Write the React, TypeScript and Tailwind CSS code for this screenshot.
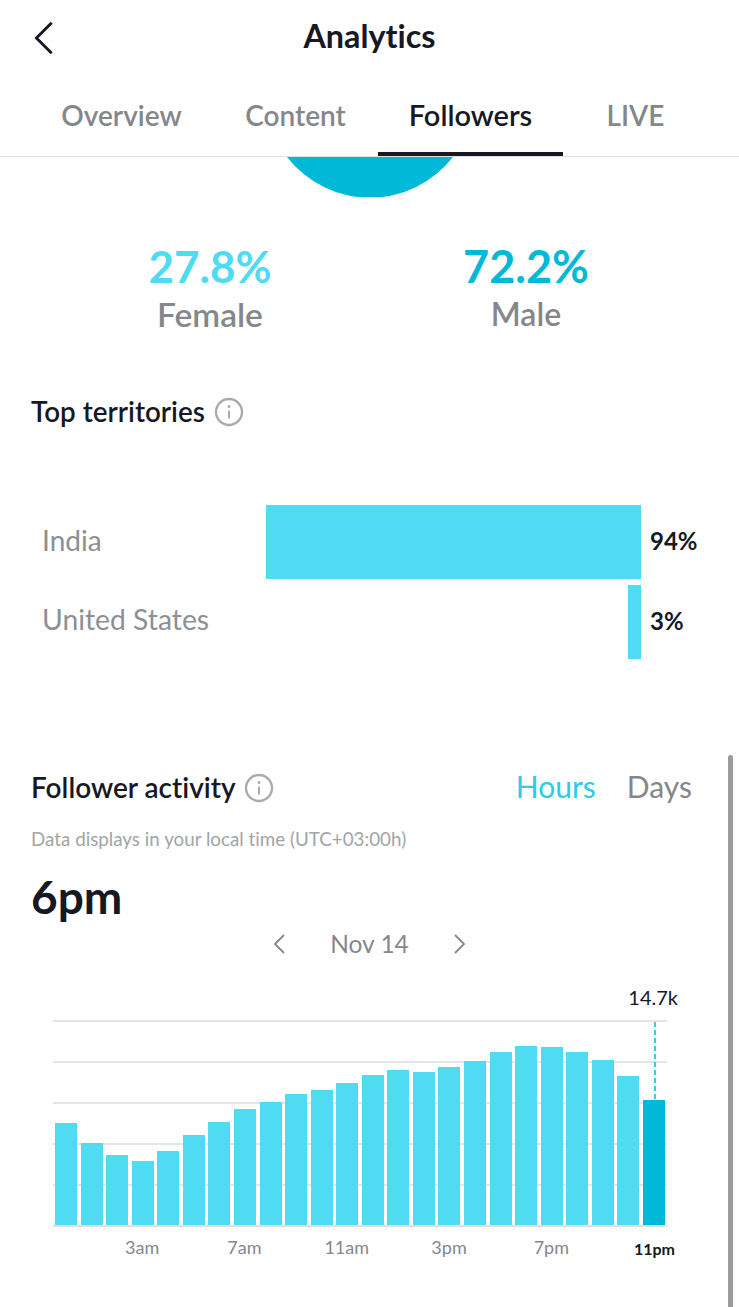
const heights = [102, 82, 70, 64, 74, 90, 103, 116, 123, 131, 135, 142, 150, 155, 153, 158, 164, 173, 179, 178, 173, 165, 149, 125];
const axisLabels = ["3am", "7am", "11am", "3pm", "7pm"];

function Info() {
  return (
    <svg width="30" height="30" viewBox="0 0 30 30" fill="none" className="shrink-0">
      <circle cx="15" cy="15" r="13" stroke="#a9abae" strokeWidth="2.4" />
      <circle cx="15" cy="9.5" r="1.5" fill="#a9abae" />
      <path d="M15 13.5v8" stroke="#a9abae" strokeWidth="2" />
    </svg>
  );
}

function Chev({ dir, size, color, w }: { dir: "l" | "r"; size: number; color: string; w: number }) {
  return (
    <svg width={size * 0.6} height={size} viewBox="0 0 12 20" fill="none">
      <path d={dir === "l" ? "M11 1 2 10l9 9" : "M1 1l9 9-9 9"} stroke={color} strokeWidth={w} />
    </svg>
  );
}

export default function App() {
  return (
    <div className="relative h-[1307px] w-[739px] overflow-hidden bg-white font-['Lato','Liberation_Sans',sans-serif] [font-variant-ligatures:none] text-[#161823]">
      <header className="relative flex h-[76px] items-center justify-center">
        <div className="absolute left-[33px] top-[21px]">
          <Chev dir="l" size={34} color="#161823" w={1.7} />
        </div>
        <h1 className="pb-[4px] text-[32.3px] font-bold">Analytics</h1>
      </header>

      <nav className="flex h-[81px] border-b border-[#dedfe0] pl-[30px] text-[28px] font-semibold text-[#85878b]">
        <div className="flex w-[183px] items-center justify-center pb-[2px]">Overview</div>
        <div className="flex w-[165px] items-center justify-center pb-[2px]">Content</div>
        <div className="flex w-[185px] items-center justify-center border-b-[4px] border-[#161823] pt-[2px] text-[29px] text-[#161823]">Followers</div>
        <div className="flex w-[145px] items-center justify-center pb-[2px]">LIVE</div>
      </nav>

      <div className="flex h-[40px] justify-center">
        <svg width="166" height="40" viewBox="0 0 166 40">
          <path d="M0 0 H166 A105 105 0 0 1 0 0Z" fill="#00b9d6" />
        </svg>
      </div>

      <section className="mt-[40px] flex pl-[52px]">
        <div className="flex w-[316px] flex-col items-center">
          <div className="text-[44px] leading-[58px] font-bold text-[#4fdcf3]">27.8%</div>
          <div className="mt-[2px] text-[33.5px] leading-[34px] font-semibold text-[#85878b]">Female</div>
        </div>
        <div className="flex w-[316px] flex-col items-center">
          <div className="text-[45px] leading-[58px] font-bold text-[#00b9d6]">72.2%</div>
          <div className="mt-[2px] text-[32px] leading-[34px] font-semibold text-[#85878b]">Male</div>
        </div>
      </section>

      <section className="mt-[61px] px-[31px]">
        <div className="flex h-[40px] items-center gap-[9px]">
          <h2 className="text-[27.8px] font-semibold">Top territories</h2>
          <Info />
        </div>
        <div className="mt-[73px] flex h-[74px] items-center">
          <div className="ml-[11px] w-[224px] pb-[4px] text-[28px] text-[#8d8f93]">India</div>
          <div className="h-full w-[375px] bg-[#4fdcf3]" />
          <div className="ml-[9px] pb-[2px] text-[24px] font-bold">94%</div>
        </div>
        <div className="mt-[6px] flex h-[74px] items-center">
          <div className="ml-[11px] w-[586px] pb-[5px] text-[28.3px] text-[#8d8f93]">United States</div>
          <div className="h-full w-[13px] bg-[#4fdcf3]" />
          <div className="ml-[9px] pb-[2px] text-[24px] font-bold">3%</div>
        </div>
      </section>

      <section className="mt-[109px] px-[31px]">
        <div className="flex h-[40px] items-center">
          <h2 className="pb-[2px] text-[28px] font-semibold">Follower activity</h2>
          <div className="ml-[8px]"><Info /></div>
          <div className="ml-auto pr-[16px] pb-[4px] text-[30px] text-[#85878b]">
            <span className="text-[#2bcde6]">Hours</span>
            <span className="ml-[31px]">Days</span>
          </div>
        </div>
        <p className="mt-[20px] text-[18.8px] leading-[22px] text-[#a2a4a7]">Data displays in your local time (UTC+03:00h)</p>
        <div className="mt-[19px] text-[46px] leading-[56px] font-bold">6pm</div>
        <div className="mt-[2px] flex h-[34px] items-center justify-center text-[24.5px] text-[#85878b]">
          <Chev dir="l" size={20} color="#85878b" w={1.8} />
          <span className="mx-[45px]">Nov 14</span>
          <Chev dir="r" size={20} color="#85878b" w={1.8} />
        </div>

        <div className="relative mt-[31px] ml-[22px] h-[28px] w-[614px]">
          <span className="absolute right-[-11px] top-[-9px] text-[20px] leading-[28px]">14.7k</span>
        </div>

        <div className="relative ml-[22px] h-[207px] w-[614px] border-b-2 border-[#dedfe0]">
          <div className="flex h-full flex-col justify-between">
            {[0, 1, 2, 3, 4].map((i) => (
              <div key={i} className="h-[2px] bg-[#e4e5e6]" />
            ))}
            <div />
          </div>
          <div className="absolute inset-x-[2px] bottom-0 flex items-end justify-between">
            {heights.map((h, i) => (
              <div
                key={i}
                className={i === 23 ? "w-[22px] bg-[#00b9d6]" : "w-[22px] bg-[#4fdcf3]"}
                style={{ height: h }}
              />
            ))}
          </div>
          <svg width="2" height="78" className="absolute right-[11px] top-[2px]">
            <line x1="1" y1="0" x2="1" y2="78" stroke="#00b9d6" strokeWidth="1.5" strokeDasharray="5 3" />
          </svg>
        </div>

        <div className="relative mt-[8px] ml-[22px] flex h-[24px] w-[614px] pl-[38px] text-[18px] leading-[24px] text-[#85878b]">
          {axisLabels.map((l) => (
            <span key={l} className="w-[102.3px] text-center">{l}</span>
          ))}
          <span className="absolute right-[-8px] top-[2px] text-[16px] font-bold text-[#161823]">11pm</span>
        </div>
      </section>

      <div className="absolute right-[6px] top-[755px] bottom-0 w-[5px] rounded-t-full bg-[#9a9b9d]" />
    </div>
  );
}
